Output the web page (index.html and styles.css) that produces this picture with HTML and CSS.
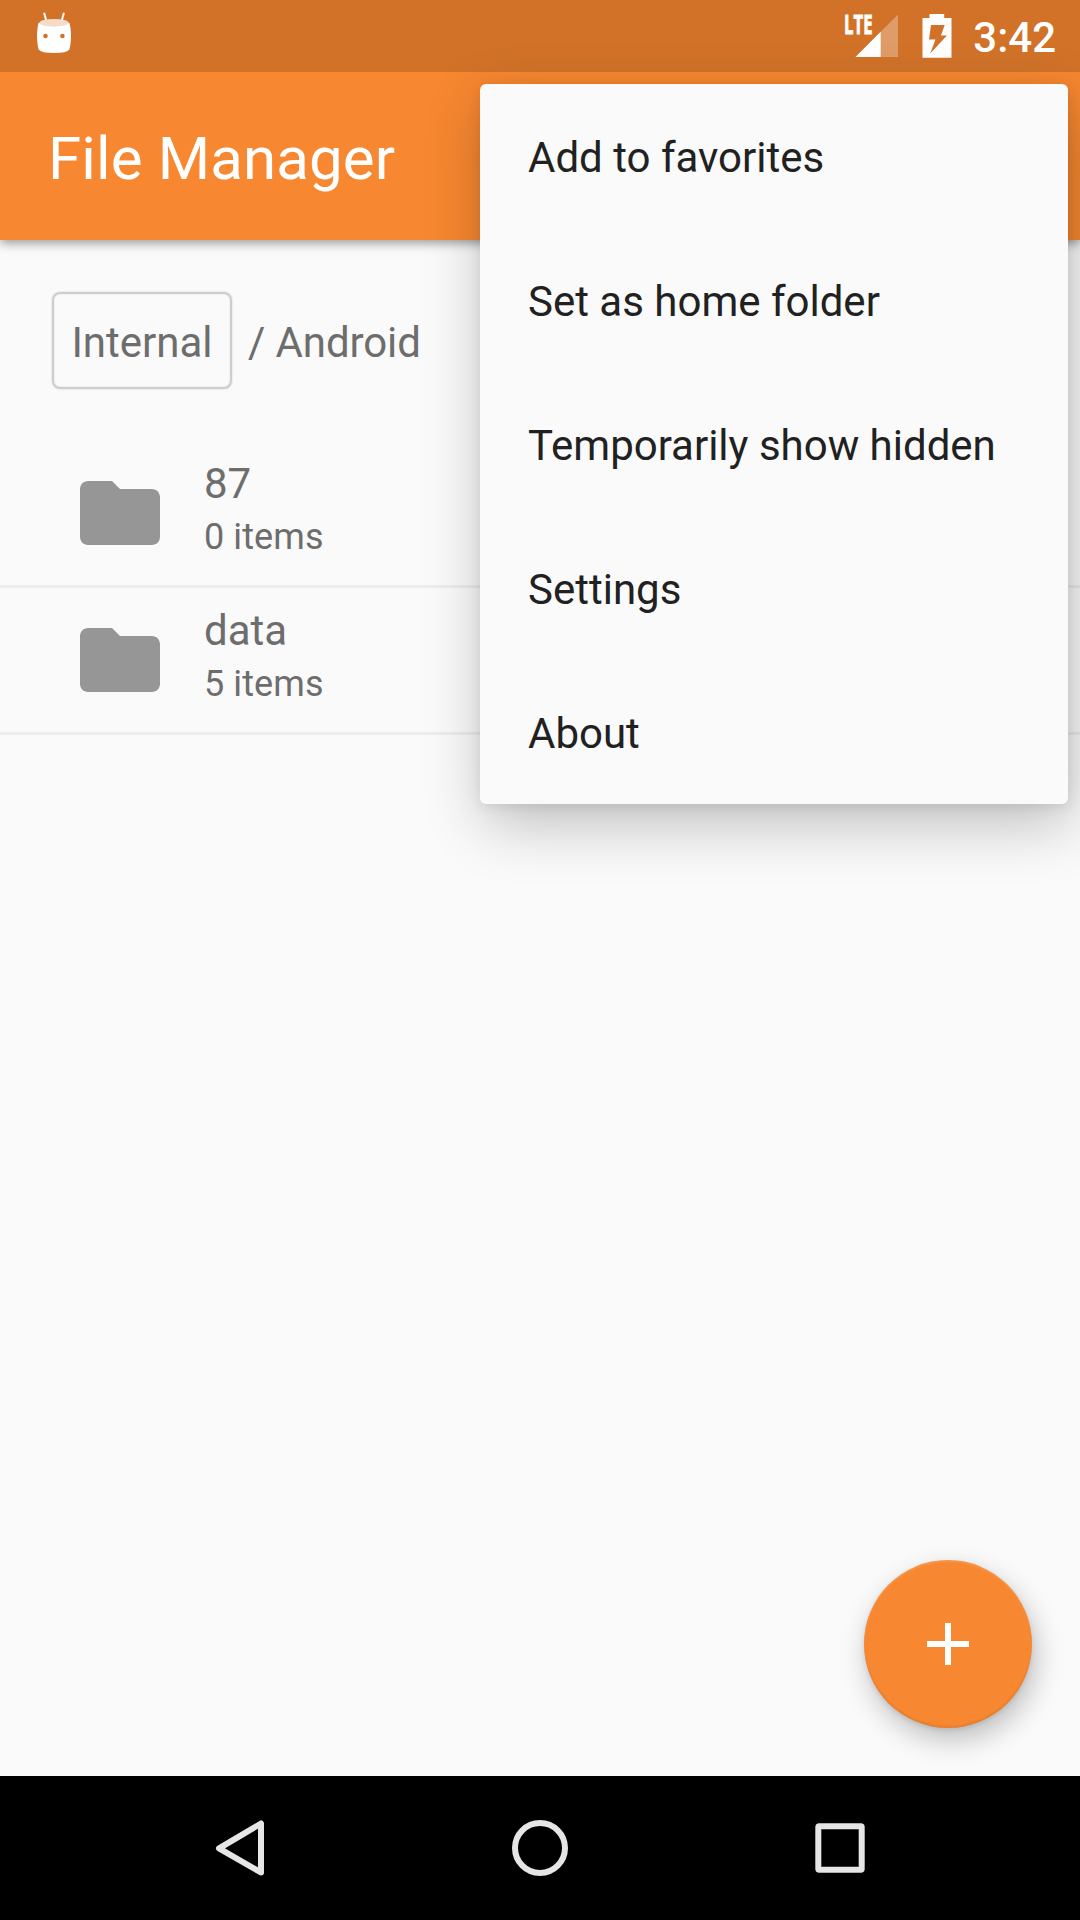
FILE: index.html
```html
<!DOCTYPE html>
<html lang="en">
<head>
<meta charset="utf-8">
<title>File Manager</title>
<link rel="stylesheet" href="styles.css">
</head>
<body>
<div class="screen">
  <header class="status-bar">
    <svg class="marshmallow" width="40" height="44" viewBox="34 11 40 44">
      <path d="M44.3 13.5 46.6 22M63.700 13.500 61.400 22" stroke="#fff" stroke-width="2" stroke-linecap="round"/>
      <path d="M38.500 23Q54 18 69.500 23C71.500 30 71.500 43 69.300 49.500Q67 53 54 53T38.700 49.500C36.500 43 36.500 30 38.500 23Z" fill="#fff"/>
      <ellipse cx="54" cy="22.800" rx="14.500" ry="3.900" fill="#f4dccb"/>
      <circle cx="45.500" cy="36" r="2.300" fill="#d17229"/>
      <circle cx="62.400" cy="36" r="2.300" fill="#d17229"/>
    </svg>
    <div class="status-right">
      <svg class="signal" width="56" height="52" viewBox="843 6 56 52">
        <path d="M898 14.500V57H855.500Z" fill="#fff" fill-opacity=".3"/>
        <path d="M880.700 31.800V57H855.500Z" fill="#fff"/>
        <text class="lte" x="844" y="33.500" textLength="28.500" lengthAdjust="spacingAndGlyphs">LTE</text>
      </svg>
      <svg class="battery" width="30" height="46" viewBox="922.500 12 30 46">
        <path fill="#fff" fill-rule="evenodd" d="M930 14h14.700v4H952v39.700H923V18h7zM931.500 25 929.500 39.500H936L930.700 53.500 947.500 35.500H941.500L945.200 25Z"/>
      </svg>
      <span class="clock">3:42</span>
    </div>
  </header>
  <div class="app-bar"><h1 class="title">File Manager</h1></div>
  <main class="content">
    <nav class="breadcrumbs">
      <span class="crumb-box">Internal</span>
      <span class="crumb">/ Android</span>
    </nav>
    <ul class="files">
      <li class="file">
        <svg class="folder" viewBox="0 0 24 24"><path d="M10 4H4c-1.100 0-2 .9-2 2v12c0 1.100.9 2 2 2h16c1.100 0 2-.9 2-2V8c0-1.100-.9-2-2-2h-8l-2-2z"/></svg>
        <div class="file-text"><div class="name">87</div><div class="count">0 items</div></div>
      </li>
      <li class="file">
        <svg class="folder" viewBox="0 0 24 24"><path d="M10 4H4c-1.100 0-2 .9-2 2v12c0 1.100.9 2 2 2h16c1.100 0 2-.9 2-2V8c0-1.100-.9-2-2-2h-8l-2-2z"/></svg>
        <div class="file-text"><div class="name">data</div><div class="count">5 items</div></div>
      </li>
    </ul>
  </main>
  <div class="nav-bar">
    <svg viewBox="0 0 60 60"><path d="M51 5.500V54.500L9 30.300Z"/></svg>
    <svg viewBox="0 0 60 60"><circle cx="30" cy="30" r="25"/></svg>
    <svg viewBox="0 0 60 60"><rect x="8.300" y="8.300" width="43.400" height="43.400" rx="1"/></svg>
  </div>
  <button class="fab" aria-label="Add"><svg width="42" height="42" viewBox="0 0 42 42"><path d="M21 0V42M0 21H42" stroke="#fff" stroke-width="6"/></svg></button>
  <ul class="menu">
    <li>Add to favorites</li>
    <li>Set as home folder</li>
    <li>Temporarily show hidden</li>
    <li>Settings</li>
    <li>About</li>
  </ul>
</div>
</body>
</html>
```
FILE: styles.css
```css
* { box-sizing: border-box; }
body { margin: 0; font-family: Roboto, sans-serif; background: #fafafa; }
ul { list-style: none; margin: 0; padding: 0; }
svg { display: block; }
.screen { position: relative; width: 1080px; height: 1920px; overflow: hidden; display: flex; flex-direction: column; background: #fafafa; }
.status-bar { height: 72px; flex: none; z-index: 2; background: #d17228; display: flex; justify-content: space-between; padding: 0 24px 0 34px; }
.marshmallow { margin-top: 11px; }
.status-right { display: flex; align-items: flex-start; }
.signal { margin-top: 6px; overflow: visible; }
.battery { margin-top: 12px; margin-left: 23px; }
.lte { font: 700 26.5px "Open Sans", sans-serif; fill: #fff; stroke: #fff; stroke-width: .9px; }
.clock { font-size: 42px; font-weight: 500; color: #fff; line-height: 50px; padding-top: 13px; margin-left: 21px; }
.app-bar { height: 168px; flex: none; background: #f78730; padding: 0 48px; display: flex; align-items: center; box-shadow: 0 3px 10px rgba(0,0,0,.4); z-index: 1; }
.title { margin: 0; font-size: 60px; font-weight: 400; letter-spacing: .12px; line-height: 70px; color: #fff; padding-top: 6px; }
.content { flex: 1; color: #6d6d6d; }
.breadcrumbs { display: flex; align-items: flex-start; padding: 52px 0 0 52px; font-size: 42px; height: 150px; }
.crumb-box { height: 97px; width: 180px; line-height: 97px; text-align: center; border: 2px solid #cdcdcd; border-radius: 8px; box-shadow: 0 0 2px #ccc, inset 0 0 2px #ddd; }
.crumb { line-height: 99px; margin-left: 16px; padding-top: 1px; letter-spacing: -.1px; }
.files { padding-top: 51px; }
.file { height: 147px; border-bottom: 3px solid #ededed; display: flex; padding-left: 72px; }
.folder { width: 96px; height: 96px; margin-top: 24px; fill: #969696; }
.file-text { margin-left: 36px; padding-top: 18px; }
.name { font-size: 42px; line-height: 50px; }
.count { font-size: 36px; line-height: 42px; margin-top: 7px; letter-spacing: .1px; }
.nav-bar { height: 144px; flex: none; background: #000; display: flex; justify-content: center; align-items: center; gap: 240px; }
.nav-bar svg { width: 60px; height: 60px; fill: none; stroke: #e6e6e6; stroke-width: 6; stroke-linejoin: round; }
.fab { position: absolute; left: 864px; top: 1560px; width: 168px; height: 168px; border: 0; border-radius: 50%; padding: 0; background: #f78730; display: flex; align-items: center; justify-content: center; box-shadow: 4px 12px 28px rgba(0,0,0,.24), 0 2px 5px rgba(0,0,0,.1), inset 0 -2px 2px rgba(0,0,0,.07), inset 0 2px 2px rgba(255,255,255,.12); }
.menu { position: absolute; z-index: 3; left: 480px; top: 84px; width: 588px; height: 720px; border-radius: 6px; background: #fafafa; color: #212121; font-size: 42px; box-shadow: 4px 20px 60px rgba(0,0,0,.24), 1px 3px 14px rgba(0,0,0,.09); }
.menu li { height: 144px; line-height: 148px; padding-left: 48px; }
```
